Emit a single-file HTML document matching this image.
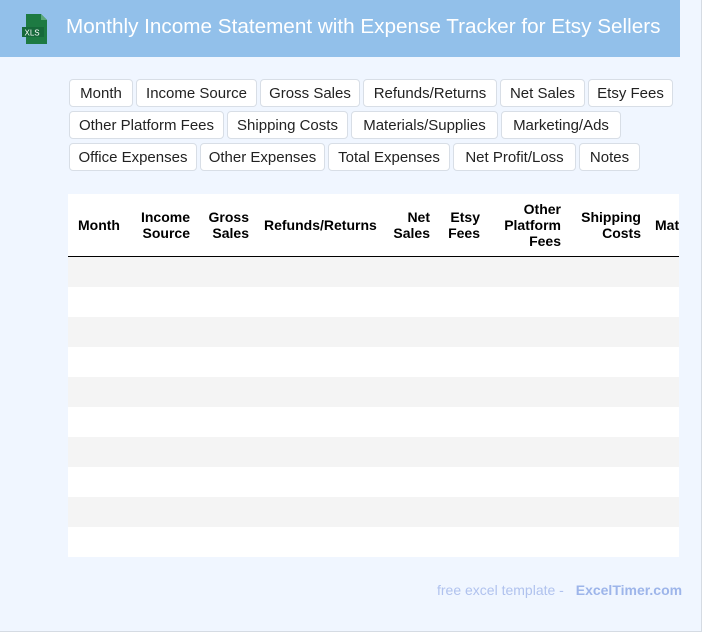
<!DOCTYPE html>
<html><head><meta charset="utf-8"><style>
*{margin:0;padding:0;box-sizing:border-box}
body{width:702px;height:632px;background:#f0f6ff;position:relative;overflow:hidden;font-family:"Liberation Sans",Arial,sans-serif}
.frame{position:absolute;left:0;top:0;width:702px;height:632px;border:1px solid #d5dbe3;border-top:none;border-left:none}
.hdr{position:absolute;left:0;top:0;width:680px;height:57px;background:#92c0ea}
.hdr h1{position:absolute;left:66px;top:15px;font-weight:normal;font-size:20.7px;color:#fff;white-space:nowrap}
.b{position:absolute;height:28px;background:#fff;border:1px solid #d8dee6;border-radius:4px;font-size:15px;color:#222;text-align:center;line-height:28px;white-space:nowrap}
.tbl{position:absolute;left:68px;top:194px;width:611px;height:363px;background:#fff;overflow:hidden}
.th{position:absolute;font-weight:bold;font-size:14px;line-height:16px;color:#000;text-align:right;white-space:nowrap}
.line{position:absolute;left:0;top:62px;width:611px;height:1px;background:#000}
.r{position:absolute;left:0;width:611px;height:30px;background:#f4f4f4}
.foot{position:absolute;top:582px;left:437px;font-size:14px;color:#b0c2ee;white-space:nowrap}
.foot b{color:#9db5ea;margin-left:8px}
</style></head><body>
<div class="frame"></div>
<div class="hdr">
<svg style="position:absolute;left:21px;top:13px" width="30" height="32" viewBox="0 0 30 32"><path d="M5 1h15l6 6v24H5z" fill="#1d7a42"/><path d="M20 1v6h6z" fill="#5aa878"/><rect x="1" y="14" width="22" height="10" fill="#16693a"/><text x="3.5" y="22.5" font-family="Liberation Sans" font-size="8" fill="#fff">XLS</text></svg>
<h1>Monthly Income Statement with Expense Tracker for Etsy Sellers</h1>
</div>
<div class="b" style="left:69px;top:79px;width:64px">Month</div>
<div class="b" style="left:136px;top:79px;width:121px">Income Source</div>
<div class="b" style="left:260px;top:79px;width:100px">Gross Sales</div>
<div class="b" style="left:363px;top:79px;width:134px">Refunds/Returns</div>
<div class="b" style="left:500px;top:79px;width:85px">Net Sales</div>
<div class="b" style="left:588px;top:79px;width:85px">Etsy Fees</div>
<div class="b" style="left:69px;top:111px;width:155px">Other Platform Fees</div>
<div class="b" style="left:227px;top:111px;width:121px">Shipping Costs</div>
<div class="b" style="left:351px;top:111px;width:147px">Materials/Supplies</div>
<div class="b" style="left:501px;top:111px;width:120px">Marketing/Ads</div>
<div class="b" style="left:69px;top:143px;width:128px">Office Expenses</div>
<div class="b" style="left:200px;top:143px;width:125px">Other Expenses</div>
<div class="b" style="left:328px;top:143px;width:122px">Total Expenses</div>
<div class="b" style="left:453px;top:143px;width:123px">Net Profit/Loss</div>
<div class="b" style="left:579px;top:143px;width:61px">Notes</div>
<div class="tbl">
<div class="th" style="left:10px;top:23px;text-align:left">Month</div>
<div class="th" style="right:489px;top:15px">Income<br>Source</div>
<div class="th" style="right:430px;top:15px">Gross<br>Sales</div>
<div class="th" style="left:196px;top:23px;text-align:left">Refunds/Returns</div>
<div class="th" style="right:249px;top:15px">Net<br>Sales</div>
<div class="th" style="right:199px;top:15px">Etsy<br>Fees</div>
<div class="th" style="right:118px;top:7px">Other<br>Platform<br>Fees</div>
<div class="th" style="right:38px;top:15px">Shipping<br>Costs</div>
<div class="th" style="left:587px;top:23px;text-align:left">Materials</div>
<div class="line"></div>
<div class="r" style="top:63px"></div>
<div class="r" style="top:123px"></div>
<div class="r" style="top:183px"></div>
<div class="r" style="top:243px"></div>
<div class="r" style="top:303px"></div>
</div>
<div class="foot">free excel template - <b>ExcelTimer.com</b></div>
</body></html>
